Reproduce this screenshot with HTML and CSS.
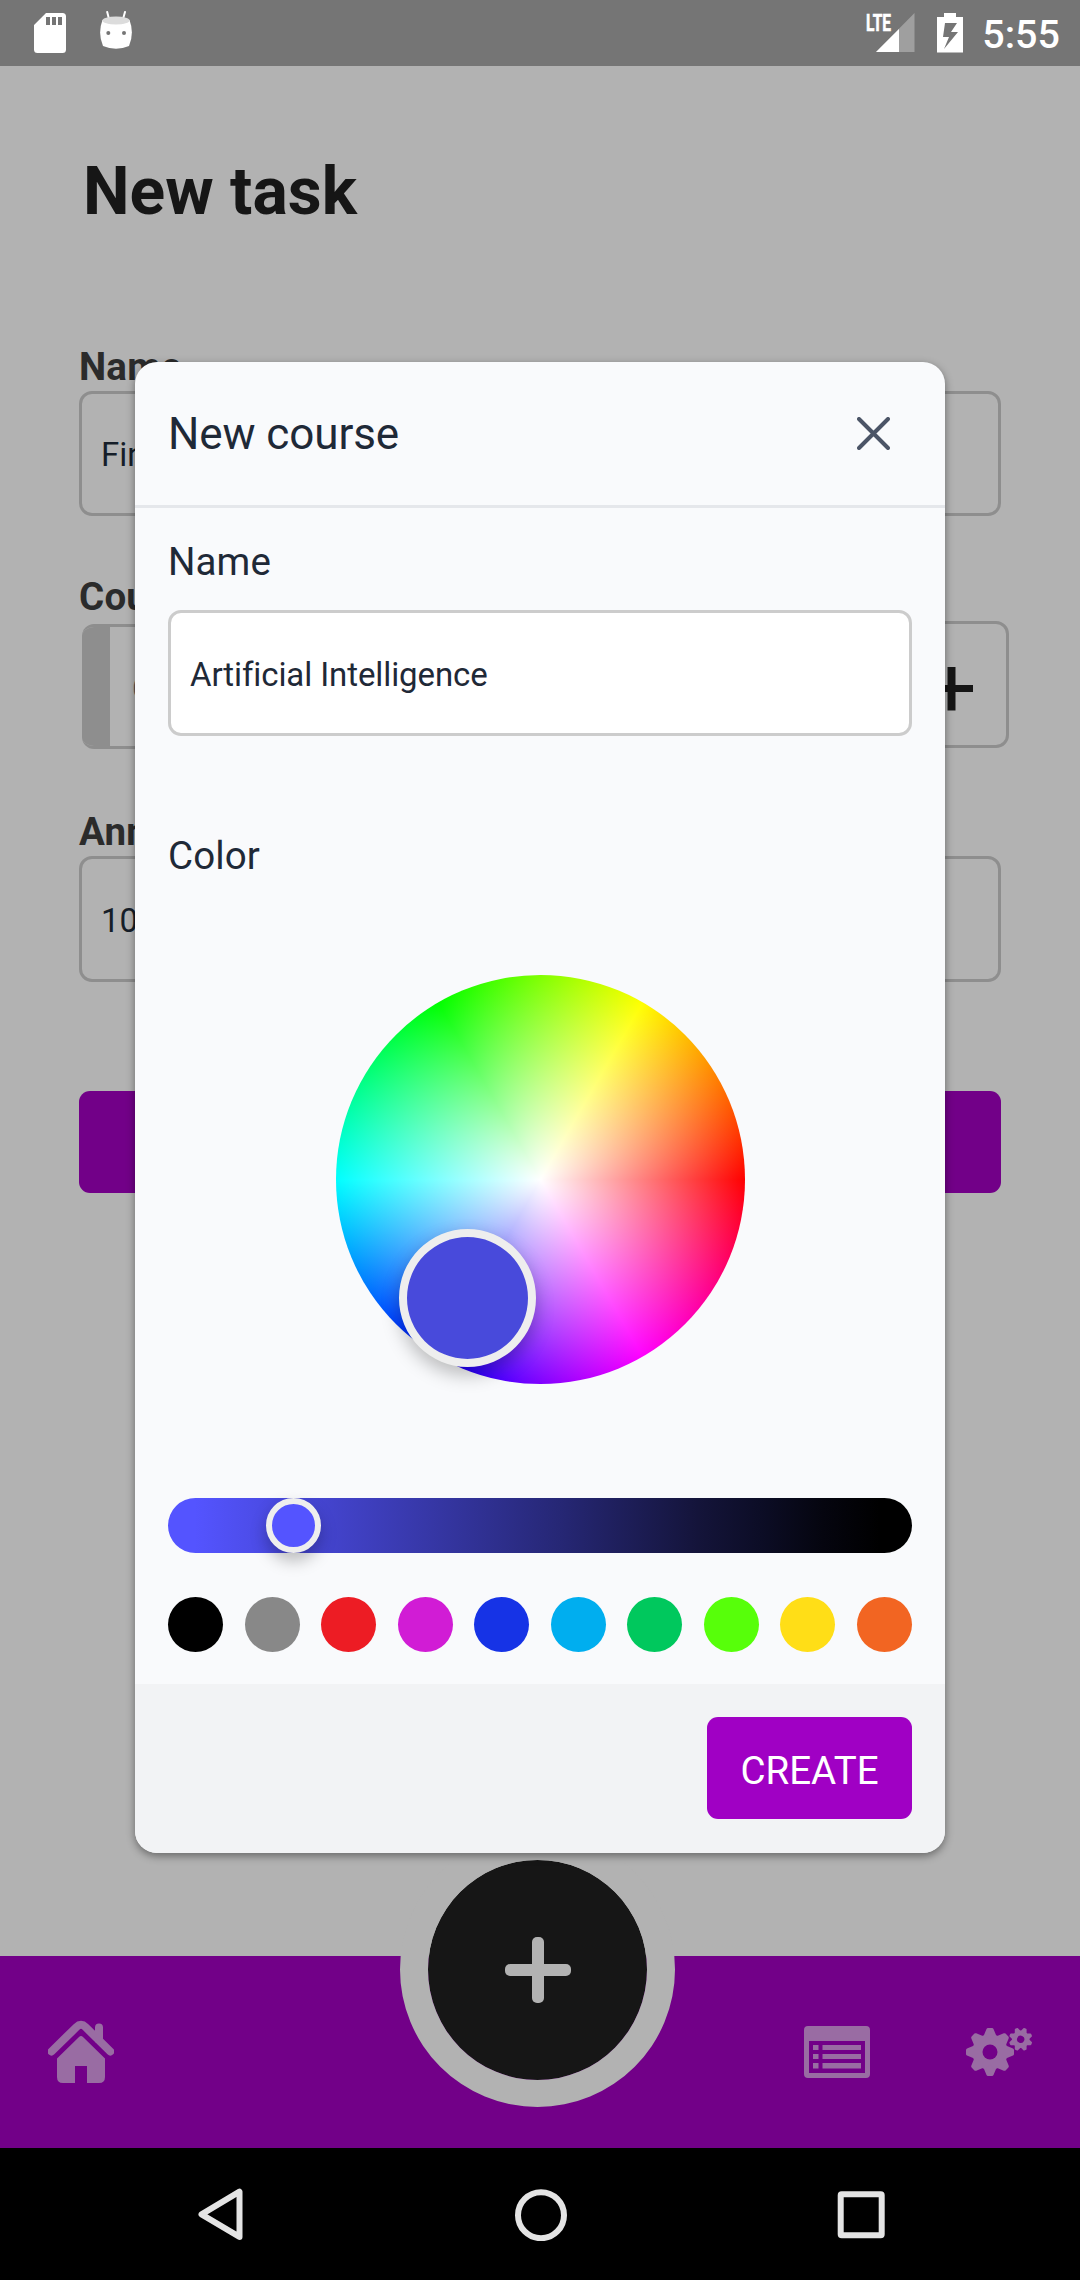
FILE: index.html
```html
<!DOCTYPE html>
<html lang="en">
<head>
<meta charset="utf-8">
<title>New task</title>
<link rel="stylesheet" href="styles.css">
</head>
<body>
<div class="phone">
  <header class="status-bar">
    <div class="status-group">
      <svg class="icon-sd" viewBox="0 0 32 40" width="32" height="40"><path fill="#fff" fill-rule="evenodd" d="M12 0H28.500A3.500 3.500 0 0 1 32 3.500V36.500A3.500 3.500 0 0 1 28.500 40H3.500A3.500 3.500 0 0 1 0 36.500V12ZM12 4V12H16V4ZM18 4V12H22V4ZM24 4V12H28V4Z"/></svg>
      <svg class="icon-droid" viewBox="0 0 32 38" width="32" height="38"><path d="M7.200 1L9 8M25 1L23 8" stroke="#fff" stroke-width="2" stroke-linecap="round"/><path fill="#fff" d="M2.500 9Q-2.500 22 3 35Q16 40.500 29 35Q34.500 22 29.500 9Z"/><ellipse cx="16" cy="9.500" rx="13.700" ry="4" fill="#dcdcdc"/><circle cx="8.300" cy="22" r="2" fill="#757575"/><circle cx="24" cy="22" r="2" fill="#757575"/></svg>
    </div>
    <div class="status-group">
      <svg class="icon-signal" viewBox="0 0 49 40" width="49" height="40"><path fill="#9f9f9f" d="M48.500 0V39H10Z"/><path fill="#fff" d="M33 16V39H10Z"/><text class="lte" x="0" y="17.500" textLength="25" lengthAdjust="spacingAndGlyphs">LTE</text></svg>
      <svg class="icon-battery" viewBox="0 0 26 40" width="26" height="40"><path fill="#fff" fill-rule="evenodd" d="M7 0H19V4H26V39.500H0V4H7ZM8 10L6 24H12L7 36L21 19H14L20 10Z"/></svg>
      <span class="clock">5:55</span>
    </div>
  </header>

  <main class="screen">
    <h1 class="page-title">New task</h1>
    <form class="task-form">
      <div class="field">
        <span class="label">Name</span>
        <div class="text-box">Fin</div>
      </div>
      <div class="field field-course">
        <span class="label">Course</span>
        <div class="course-row">
          <div class="course-select"><span class="course-color"></span><span class="course-name">C</span></div>
          <div class="course-add"><svg viewBox="0 0 44 44" width="44" height="44"><path fill="#161616" d="M18.500 0H26.500V18H44V25H26.500V43.500H18.500V25H1V18H18.500Z"/></svg></div>
        </div>
      </div>
      <div class="field field-announce">
        <span class="label">Ann</span>
        <div class="text-box">10</div>
      </div>
      <div class="submit"></div>
    </form>
  </main>

  <nav class="tab-bar">
    <svg class="tab-home" viewBox="48 2020 66 64" width="66" height="64">
      <path d="M51.500 2051.500L76.500 2027Q81 2022.500 85.500 2027L110.300 2051.500" fill="none" stroke="#996ca3" stroke-width="8" stroke-linecap="round"/>
      <path fill="#996ca3" d="M95 2042V2027.500A4 4 0 0 1 103 2027.500V2046ZM81 2036Q82 2036 83 2037L105 2058.500V2077Q105 2083 99 2083H87V2066H75V2083H63Q57 2083 57 2077V2058.500L79 2037Q80 2036 81 2036Z"/>
    </svg>
    <svg class="tab-list" viewBox="0 0 66 52" width="66" height="52"><path fill="#996ca3" fill-rule="evenodd" d="M4 0H62Q66 0 66 4V48Q66 52 62 52H4Q0 52 0 48V4Q0 0 4 0ZM5 15V47H61V15Z"/><path fill="#996ca3" d="M9 19h5.500v5h-5.500zM9 28h5.500v5h-5.500zM9 37h5.500v5.500h-5.500zM18.500 19H57v5H18.500zM18.500 28H57v5H18.500zM18.500 37H57v5.500H18.500z"/></svg>
    <svg class="tab-settings" viewBox="966 2026 68 52" width="68" height="52" fill="#996ca3">
      <defs>
        <g id="gear">
          <path id="teeth" d="M-9 -14L-6 -17L-3.500 -23Q-3 -24 -2 -24H2Q3 -24 3.500 -23L6 -17L9 -14V14L6 17L3.500 23Q3 24 2 24H-2Q-3 24 -3.500 23L-6 17L-9 14Z"/>
          <use href="#teeth" transform="rotate(45)"/><use href="#teeth" transform="rotate(90)"/><use href="#teeth" transform="rotate(135)"/>
          <circle r="7.500" fill="#720088"/>
        </g>
      </defs>
      <use href="#gear" transform="translate(990 2052)"/>
      <use href="#gear" transform="translate(1020.700 2039.300) rotate(22.500) scale(.49)"/>
    </svg>
    <div class="fab"><svg viewBox="0 0 66 66" width="66" height="66"><rect x="27" width="12" height="66" rx="5" fill="#b2b2b2"/><rect y="27" width="66" height="12" rx="5" fill="#b2b2b2"/></svg></div>
  </nav>

  <footer class="system-nav">
    <svg viewBox="0 0 52 52" width="52" height="52"><path d="M45.500 3.700V48.900L7.500 26.300Z" fill="none" stroke="#e4e4e4" stroke-width="6" stroke-linejoin="round"/></svg>
    <svg viewBox="0 0 53 53" width="53" height="53"><circle cx="27" cy="27.200" r="23" fill="none" stroke="#e4e4e4" stroke-width="6"/></svg>
    <svg viewBox="0 0 52 52" width="52" height="52"><rect x="5.700" y="6.200" width="41" height="41" rx="1" fill="none" stroke="#e4e4e4" stroke-width="6" stroke-linejoin="round"/></svg>
  </footer>

  <div class="overlay">
    <section class="dialog">
      <header class="dialog-header">
        <h2 class="dialog-title">New course</h2>
        <svg viewBox="0 0 33 33" width="33" height="33"><path d="M2 2L31 31M31 2L2 31" stroke="#4b5466" stroke-width="4" stroke-linecap="round"/></svg>
      </header>
      <div class="dialog-body">
        <span class="dialog-label">Name</span>
        <div class="text-box name-box">Artificial Intelligence</div>
        <span class="dialog-label color-label">Color</span>
        <div class="wheel"><span class="wheel-thumb"></span></div>
        <div class="slider"><span class="slider-thumb"></span></div>
        <div class="swatches">
          <i class="swatch black"></i><i class="swatch gray"></i><i class="swatch red"></i><i class="swatch magenta"></i><i class="swatch blue"></i><i class="swatch sky"></i><i class="swatch green"></i><i class="swatch lime"></i><i class="swatch yellow"></i><i class="swatch orange"></i>
        </div>
      </div>
      <footer class="dialog-footer"><button class="create" type="button">CREATE</button></footer>
    </section>
  </div>
</div>
</body>
</html>
```
FILE: styles.css
```css
* { box-sizing: border-box; }
body { margin: 0; font-family: Roboto, sans-serif; background: #b2b2b2; }
svg { display: block; flex: none; }
h1, h2 { margin: 0; }

.phone {
  position: relative;
  width: 1080px;
  height: 2280px;
  display: grid;
  grid-template-columns: minmax(0, 1fr);
  grid-template-rows: 66px 1890px 192px 132px;
  overflow: hidden;
  background: #b2b2b2;
}

.status-bar {
  display: flex;
  justify-content: space-between;
  align-items: center;
  padding: 0 20px 0 34px;
  background: #757575;
}
.status-group { display: flex; align-items: center; }
.icon-droid { margin: 0 0 6px 34px; }
.icon-signal { margin-right: 22px; overflow: visible; }
.icon-battery { margin-right: 19px; }
.lte { font: 700 23px Roboto, sans-serif; fill: #fff; stroke: #fff; stroke-width: .6px; }
.clock { font-size: 39.500px; font-weight: 500; line-height: 46px; color: #fff; padding-top: 3px; }

.screen { padding: 87px 79px 0; }
.page-title { margin-left: 4px; font-size: 66px; line-height: 78px; font-weight: 700; color: #161616; }
.task-form { display: flex; flex-direction: column; margin-top: 113px; }
.label { display: block; height: 47px; font-size: 38.500px; line-height: 46px; font-weight: 700; color: #2b2b2b; letter-spacing: .2px; }
.text-box {
  display: flex;
  align-items: center;
  height: 125px;
  padding: 2px 19px 0;
  border: 3px solid #8e8e8e;
  border-radius: 13px;
  font-size: 33px;
  color: #161e29;
}
.field-course { margin-top: 58px; width: 930px; }
.field-course .label { height: 46px; }
.field-announce { margin-top: 60px; }
.course-row { display: flex; justify-content: space-between; padding: 1px 0 0 3px; }
.course-select {
  display: flex;
  align-items: center;
  width: 790px;
  height: 125px;
  margin-top: 3px;
  border: 3px solid #8e8e8e;
  border-left: 0;
  border-radius: 12px;
  overflow: hidden;
  font-size: 33px;
  color: #555;
}
.course-color { width: 28px; height: 100%; background: #8e8e8e; }
.course-name { margin-left: 22px; padding-top: 3px; }
.course-add {
  display: flex;
  align-items: center;
  justify-content: center;
  width: 117px;
  height: 127px;
  padding-top: 8px;
  border: 3px solid #8e8e8e;
  border-radius: 13px;
}
.field-announce .text-box { height: 126px; }
.submit { height: 102px; margin-top: 109px; border-radius: 11px; background: #720088; }

.tab-bar {
  position: relative;
  display: flex;
  align-items: center;
  padding: 0 46px 0 48px;
  background: #720088;
}
.tab-home { margin-right: auto; }
.tab-list { margin-right: 96px; }
.fab {
  position: absolute;
  left: 400px;
  top: -124px;
  width: 275px;
  height: 275px;
  display: flex;
  align-items: center;
  justify-content: center;
  border: 28px solid #b2b2b2;
  border-bottom-width: 27px;
  border-radius: 50%;
  background: #161616;
  background-clip: padding-box;
}

.system-nav {
  display: flex;
  align-items: center;
  justify-content: center;
  gap: 268px;
  background: #000;
}

.overlay { position: absolute; inset: 0; display: flex; justify-content: center; align-items: flex-start; padding-top: 362px; }
.dialog {
  width: 810px;
  border-radius: 22px;
  overflow: hidden;
  background: #f9fafc;
  box-shadow: 0 3px 9px rgba(0, 0, 0, .42);
  color: #1f2937;
}
.dialog-header {
  display: flex;
  align-items: center;
  justify-content: space-between;
  height: 146px;
  padding: 0 55px 0 33px;
  border-bottom: 3px solid #e5e7eb;
}
.dialog-title { font-size: 44px; line-height: 52px; font-weight: 400; letter-spacing: -.1px; }
.dialog-body { display: flex; flex-direction: column; height: 1176px; padding: 31px 33px 0; }
.dialog-label { font-size: 38.500px; line-height: 46px; letter-spacing: .1px; }
.name-box { margin-top: 25px; height: 126px; padding-top: 3px; background: #fff; border-color: #ccc; color: #1f2937; letter-spacing: -.1px; }
.color-label { margin-top: 97px; }
.wheel {
  position: relative;
  align-self: center;
  width: 409px;
  height: 409px;
  margin-top: 96px;
  border-radius: 50%;
  background:
    radial-gradient(closest-side, #fff, rgba(255, 255, 255, 0)),
    conic-gradient(from 90deg, #f00, #f0f, #00f, #0ff, #0f0, #ff0, #f00);
}
.wheel-thumb {
  position: absolute;
  left: 63px;
  top: 254px;
  width: 137px;
  height: 138px;
  border: 8px solid #eee;
  border-radius: 50%;
  background: #484adb;
  box-shadow: 0 8px 18px rgba(0, 0, 0, .25);
}
.slider {
  position: relative;
  height: 55px;
  margin-top: 114px;
  border-radius: 28px;
  background: linear-gradient(90deg, #5454ff 27px, #262775 392px, #14143a 530px, #0c0d26 592px, #05050f 655px, #000 712px);
}
.slider-thumb {
  position: absolute;
  left: 98px;
  top: 0;
  width: 55px;
  height: 55px;
  border: 6px solid #eee;
  border-radius: 50%;
  background: #5454ff;
  box-shadow: 0 8px 16px rgba(0, 0, 0, .25);
}
.swatches { display: flex; justify-content: space-between; margin-top: 43.500px; }
.swatch { width: 55px; height: 55px; border-radius: 50%; }
.black { background: #000; }
.gray { background: #888; }
.red { background: #ed1c24; }
.magenta { background: #d11cd5; }
.blue { background: #1633e6; }
.sky { background: #00aeef; }
.green { background: #00c85d; }
.lime { background: #57ff0a; }
.yellow { background: #ffde17; }
.orange { background: #f26522; }
.dialog-footer { display: flex; justify-content: flex-end; height: 169px; padding: 33px; background: #f2f3f5; }
.create {
  width: 205px;
  height: 102px;
  padding: 5px 0 0;
  border: 0;
  border-radius: 11px;
  background: #a000c4;
  font: 400 38.500px/46px Roboto, sans-serif;
  color: #fff;
}
```
